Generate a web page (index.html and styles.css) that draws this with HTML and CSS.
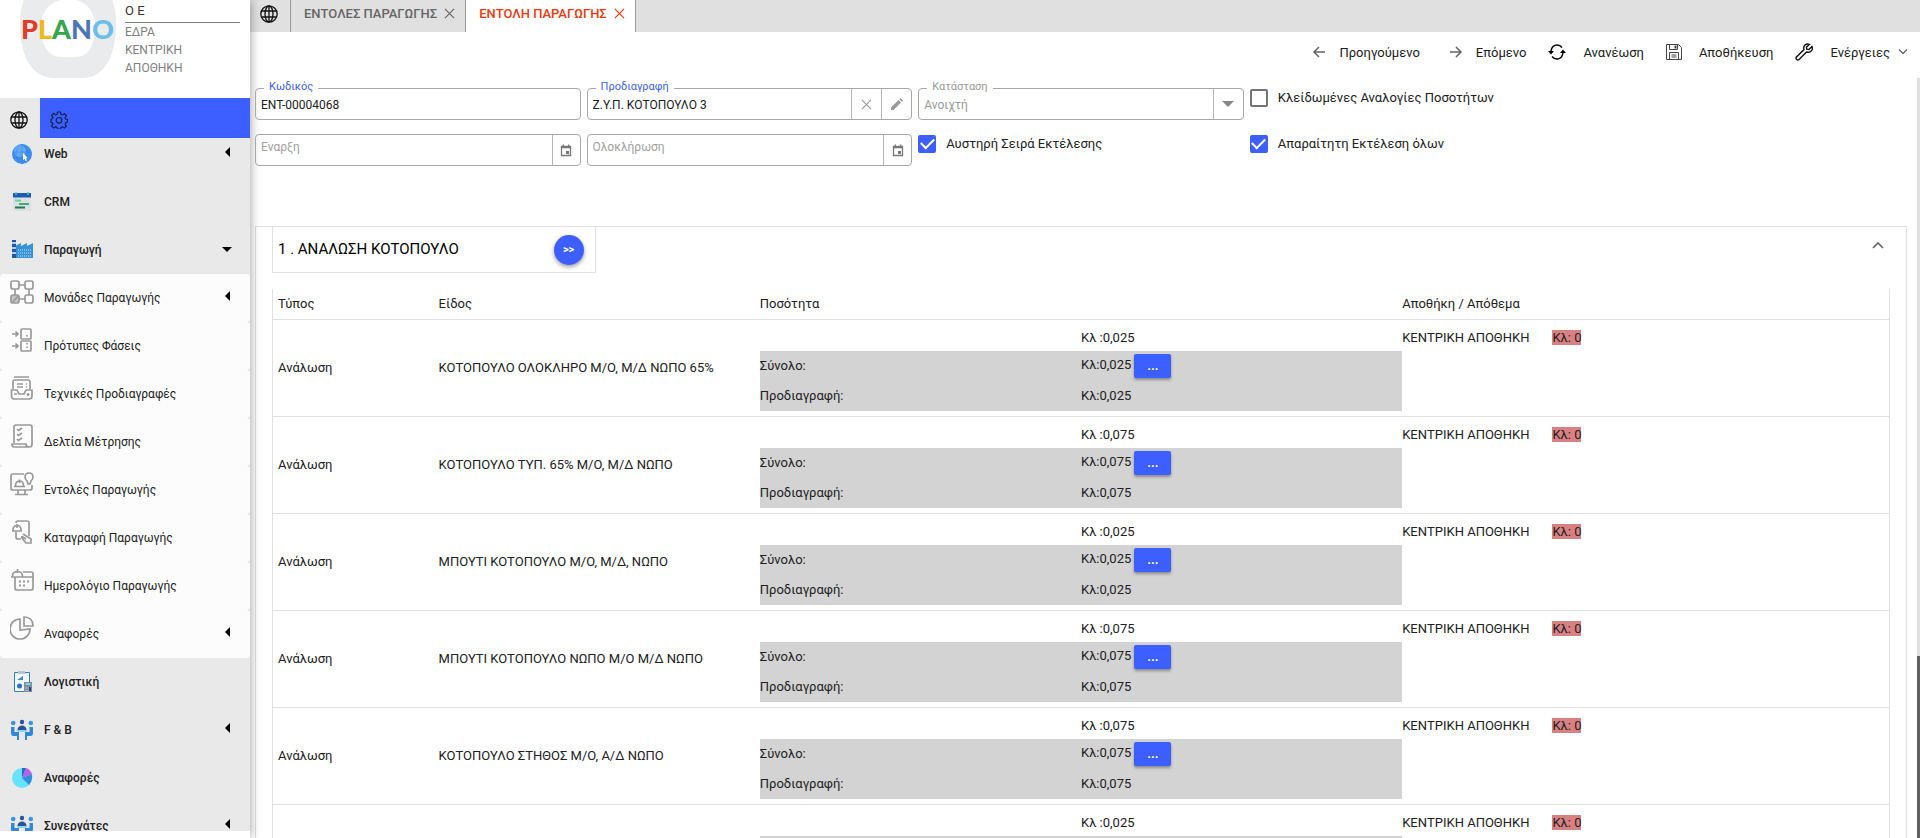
FILE: index.html
```
<!DOCTYPE html>
<html lang="el">

<head>
    <meta charset="UTF-8">
    <meta name="viewport" content="width=device-width, initial-scale=1.0">
    <title>Εντολή Παραγωγής</title>
    <link rel="stylesheet" href="styles.css">
</head>

<body>
    <!-- shared icons -->
    <svg class="defs" width="0" height="0">
        <symbol id="globe" viewBox="0 0 18 18">
            <g fill="none" stroke="#111" stroke-width="1.3">
                <circle cx="9" cy="9" r="8.2" />
                <ellipse cx="9" cy="9" rx="4" ry="8" />
                <path d="M9 1v16M1.8 6h14.4M1.8 12h14.4" />
            </g>
        </symbol>
        <symbol id="close" viewBox="0 0 12 12">
            <path d="M1 1l10 10M11 1L1 11" fill="none" stroke="currentColor" stroke-width="1.3" />
        </symbol>
        <symbol id="calendar" viewBox="0 0 12 13">
            <path d="M1.5 2.5h9v9h-9zM1 3.5h10M3.3 .5v2M8.7 .5v2" fill="none" stroke="#777" stroke-width="1.3" />
            <path d="M6 7h3v3H6z" fill="#777" />
        </symbol>
        <symbol id="people" viewBox="0 0 24 22">
            <circle cx="12" cy="3" r="2.2" fill="#27549b" />
            <path d="M7.500 11c0-6 9-6 9 0z" fill="#27549b" />
            <path d="M6 11h12l-2 2H8z" fill="#8fd3f5" />
            <circle cx="3.200" cy="4" r="2.300" fill="#3d94e0" />
            <circle cx="20.800" cy="4" r="2.300" fill="#3d94e0" />
            <path d="M1 8h3.500v5h4.500v8H7v-4H3.500Q1 17 1 14zM23 8h-3.500v5H15v8h2v-4h3.500q2.500 0 2.500-3z" fill="#3387d8" />
        </symbol>
    </svg>

    <div class="layout">
        <aside class="sidebar">
            <div class="brand">
                <div class="logo">
                    <svg width="98" height="78" viewBox="0 0 98 78">
                        <path d="M49-30C82-30 97-8 97 24C97 58 84 78 64 78H35C14 78 1 58 1 24C1-8 16-30 49-30zM42 0C28 3 22 14 22 27C22 42 28 57 42 57H57C71 57 76 42 76 27C76 14 70 3 57 0z" fill="#e9ebed" fill-rule="evenodd" />
                    </svg>
                    <div class="logo-text"><span class="c1">P</span><span class="c2">L</span><span class="c3">A</span><span class="c4">N</span><span class="c5">O</span></div>
                </div>
                <div class="company">
                    <div class="company-name">Ο Ε</div>
                    <div>ΕΔΡΑ</div>
                    <div>ΚΕΝΤΡΙΚΗ</div>
                    <div>ΑΠΟΘΗΚΗ</div>
                </div>
            </div>
            <div class="side-tabs">
                <button class="side-tab" aria-label="Μενού"><svg width="18" height="18"><use href="#globe" /></svg></button>
                <button class="side-tab side-tab-active" aria-label="Ρυθμίσεις">
                    <svg width="18" height="18" viewBox="0 0 18 18" fill="none" stroke="#16204f" stroke-width="1.200">
                        <path d="M7.500 1h3l.5 2.300 1.300.6 2-1.300 2.100 2.100-1.300 2 .6 1.300 1.800.5v2.500l-1.800.8-.6 1.300 1.300 2-2.100 1.900-2-1.200-1.300.6-.5 1.600h-3l-.5-1.600-1.300-.6-2 1.200-2.100-2 1.300-1.900-.6-1.300-1.300-.5V8.500l1.300-.8.6-1.300-1.300-2 2.100-1.900 2 1.300L7 3.300z" />
                        <circle cx="9" cy="9.300" r="2.800" />
                    </svg>
                </button>
            </div>
            <nav class="menu">
                <ul class="menu-list">
                    <li><a href="#" class="item">
                            <svg width="24" height="24" viewBox="0 0 24 24">
                                <circle cx="12" cy="12" r="10" fill="#3f8ef0" />
                                <circle cx="10" cy="9" r="6" fill="#62aaf7" />
                                <path d="M2 10h20M3 16h18M12 2v20M12 2C4 8 4 16 12 22M12 2c8 6 8 14 0 20" fill="none" stroke="#2f78df" stroke-width=".4" />
                                <path d="M13 11v7l1.600-1.300L15.700 19l1.200-.6-1-2.200h2z" fill="#fff" />
                            </svg>
                            <span>Web</span><i class="arrow-left"></i></a></li>
                    <li><a href="#" class="item">
                            <svg width="24" height="24" viewBox="0 0 24 24">
                                <path d="M3 7h18v14H3z" fill="#dcdfe3" />
                                <path d="M3 3h18v4.500H3z" fill="#1e5cb3" />
                                <path d="M6 2v3M18 2v3" stroke="#45c3f2" stroke-width="1.500" />
                                <path d="M5 10.500h6" stroke="#5fd49a" stroke-width="2" />
                                <path d="M9 14h10" stroke="#3fae72" stroke-width="2" />
                                <path d="M5 17.500h10" stroke="#1e7a48" stroke-width="2" />
                            </svg>
                            <span>CRM</span></a></li>
                    <li><a href="#" class="item">
                            <svg width="24" height="24" viewBox="0 0 24 24">
                                <path d="M5 20V8l6-3v3l6-3v3l6-3v15z" fill="#3592d6" />
                                <path d="M2 2h4v18H2z" fill="#2158a5" />
                                <path d="M2 5h4M2 10h4M2 15h4" stroke="#b9cbe0" stroke-width="2" />
                                <path d="M8 12h13M8 15h13M8 18h13" stroke="#d4ebfb" stroke-width="1" stroke-dasharray="1 1" />
                            </svg>
                            <span>Παραγωγή</span><i class="arrow-down"></i></a>
                        <ul class="submenu">
                            <li><a href="#" class="item">
                                    <svg class="line" width="24" height="24" viewBox="0 0 24 24">
                                        <rect x="1" y="1" width="8" height="8" rx="2" />
                                        <rect x="15" y="1" width="8" height="8" rx="2" />
                                        <rect x="15" y="15" width="8" height="8" rx="2" />
                                        <rect x="1" y="15" width="8" height="8" rx="2" fill="#c4c4c4" />
                                        <path d="M9 5h6M9 19h6M5 9v6M19 9v6M3 22l5-6" />
                                    </svg>
                                    <span>Μονάδες Παραγωγής</span><i class="arrow-left"></i></a></li>
                            <li><a href="#" class="item">
                                    <svg class="line" width="24" height="24" viewBox="0 0 24 24">
                                        <rect x="11" y="1" width="10" height="10" rx="1" />
                                        <rect x="11" y="13" width="10" height="10" rx="1" />
                                        <path d="M2 6h6M5.500 3.500L8 6 5.500 8.500M2 18h6M5.500 15.500L8 18l-2.500 2.500M17 7v1.500M17 15v1.500M17 18.500V20" />
                                    </svg>
                                    <span>Πρότυπες Φάσεις</span></a></li>
                            <li><a href="#" class="item">
                                    <svg class="line" width="24" height="24" viewBox="0 0 24 24">
                                        <path d="M4 1h15M3 13V6q0-2 2-2h13q2 0 2 2v7M7 8h6M16 8h1M7 11h6M16 11h1M1.500 14H7l2 4h5l2-4h6v6q0 3-3 3H4q-2.500 0-2.500-3zM18 17v3M16.500 18.500h3M4 18h3" />
                                    </svg>
                                    <span>Τεχνικές Προδιαγραφές</span></a></li>
                            <li><a href="#" class="item">
                                    <svg class="line" width="24" height="24" viewBox="0 0 24 24">
                                        <path d="M4 19V3q0-2 2-2h14q2 0 2 2v17q0 3-2.500 3H4q-2 0-2-3h14q0 3 3 3M7 5l1.500 1.500L12 4M7 10l1.500 1.500L12 9M7 15l1.500 1.500L12 14" />
                                    </svg>
                                    <span>Δελτία Μέτρησης</span></a></li>
                            <li><a href="#" class="item">
                                    <svg class="line" width="24" height="24" viewBox="0 0 24 24">
                                        <path d="M14 2H3Q1 2 1 4v12q0 2 2 2h17q2 0 2-2v-3M8 18v4M15 18v4M5 22.500h13M4 14.500h11M5.500 14q0-5 4-5t4 5M9.500 7.500V11M19 1q-4 0-4 4 0 2 2 4l1 3h2l1-3q2-2 2-4 0-4-4-4z" />
                                    </svg>
                                    <span>Εντολές Παραγωγής</span></a></li>
                            <li><a href="#" class="item">
                                    <svg class="line" width="24" height="24" viewBox="0 0 24 24">
                                        <path d="M6 3q0-2 2-2h9q2 0 2 2v13M6 12v5q0 2 2 2h3M2 11h10M3 10.500q0-5 4-5t4 5M7 4v4M13 14l8 5v4h-5l-4-5q-1-2 1-1l3 2" />
                                    </svg>
                                    <span>Καταγραφή Παραγωγής</span></a></li>
                            <li><a href="#" class="item">
                                    <svg class="line" width="24" height="24" viewBox="0 0 24 24">
                                        <path d="M13 4h8q2 0 2 2v14q0 2-2 2H7q-2 0-2-2V9.500M1 9h22M2.500 8.500q0-5 5-5t5 5M7.500 1v4" />
                                        <path d="M9 13.500h11M9 17.500h8" stroke-width="2" stroke-dasharray="2 2" />
                                    </svg>
                                    <span>Ημερολόγιο Παραγωγής</span></a></li>
                            <li><a href="#" class="item">
                                    <svg class="line" width="24" height="24" viewBox="0 0 24 24">
                                        <path d="M10 3a10 10 0 1 0 10 10l-10 1zM14 1v9h9q0-9-9-9z" />
                                    </svg>
                                    <span>Αναφορές</span><i class="arrow-left"></i></a></li>
                        </ul>
                    </li>
                    <li><a href="#" class="item">
                            <svg width="24" height="24" viewBox="0 0 24 24">
                                <path d="M4.500 2.500h15v19h-15z" fill="#f4f8fc" stroke="#2f7fd0" />
                                <path d="M8 1h7v3H8z" fill="#b9c4ce" />
                                <path d="M7 10l6-4v4z" fill="#2f8de0" />
                                <circle cx="9.500" cy="16" r="2.500" fill="#2671cc" />
                                <path d="M14 12h8v10h-8z" fill="#7f8c99" />
                                <path d="M15.500 14h5" stroke="#7fd3f0" stroke-width="2" />
                                <path d="M15.500 18h5M15.500 20.500h3" stroke="#dfe5ea" stroke-dasharray="1 1" />
                                <path d="M19 17h2v4h-2z" fill="#1c4786" />
                            </svg>
                            <span>Λογιστική</span></a></li>
                    <li><a href="#" class="item"><svg width="24" height="24"><use href="#people" /></svg>
                            <span>F &amp; B</span><i class="arrow-left"></i></a></li>
                    <li><a href="#" class="item">
                            <svg width="24" height="24" viewBox="0 0 24 24">
                                <circle cx="12" cy="12" r="10" fill="#66e3ff" />
                                <path d="M12 12V2l4 0z" fill="#2369c8" />
                                <path d="M12 12l4-10q4 1 6 6z" fill="#bc61e6" />
                                <path d="M12 12l10-4q1 6-3 11z" fill="#318fe0" />
                            </svg>
                            <span>Αναφορές</span></a></li>
                    <li><a href="#" class="item"><svg width="24" height="24"><use href="#people" /></svg>
                            <span>Συνεργάτες</span><i class="arrow-left"></i></a></li>
                </ul>
            </nav>
        </aside>

        <main class="main">
            <div class="tabs">
                <button class="tab tab-home" aria-label="Αρχική"><svg width="18" height="18"><use href="#globe" /></svg></button>
                <button class="tab">ΕΝΤΟΛΕΣ ΠΑΡΑΓΩΓΗΣ <svg width="11" height="11"><use href="#close" /></svg></button>
                <button class="tab tab-active">ΕΝΤΟΛΗ ΠΑΡΑΓΩΓΗΣ <svg width="11" height="11"><use href="#close" /></svg></button>
            </div>

            <div class="toolbar">
                <button class="tool tool-arrow">
                    <svg width="14" height="14" viewBox="0 0 14 14"><path d="M13 7H2M7 2L2 7l5 5" fill="none" stroke="#666" stroke-width="1.500" /></svg>
                    Προηγούμενο</button>
                <button class="tool tool-arrow">
                    <svg width="14" height="14" viewBox="0 0 14 14"><path d="M1 7h11M7 2l5 5-5 5" fill="none" stroke="#666" stroke-width="1.500" /></svg>
                    Επόμενο</button>
                <button class="tool">
                    <svg width="18" height="16" viewBox="0 0 18 16"><path d="M3 9V7q1-6 6-6 3 0 5 2.500M15 7v2q-1 6-6 6-3 0-5-2.500" fill="none" stroke="#000" stroke-width="1.500" /><path d="M0 7h6L3 10.500zM12 9h6l-3-3.500z" /></svg>
                    Ανανέωση</button>
                <button class="tool">
                    <svg width="16" height="16" viewBox="0 0 16 16" fill="none" stroke="#444"><path d="M.5.500h12l3 3v12H.500zM3.500.500v5h8v-5M3.500 15.500v-7h9v7M5.500 11h5M5.500 13h5" /><path d="M8.500 1.500h2v3h-2z" fill="#444" stroke="none" /></svg>
                    Αποθήκευση</button>
                <button class="tool">
                    <svg width="18" height="18" viewBox="0 0 18 18" fill="none" stroke="#111" stroke-width="1.400"><path d="M14.500 1.300Q10.500 0 9 3.500q-.5 1.500 0 3L1.500 14q-1 1.500.3 2.500 1.200 1 2.500-.3L11.500 9q4 1 5.500-2 .8-1.800 0-3.500L14 6.500l-2.300-.3L11.500 4z" /></svg>
                    Ενέργειες
                    <svg class="chevron" width="10" height="6" viewBox="0 0 10 6"><path d="M1 .500l4 4 4-4" fill="none" stroke="#666" stroke-width="1.300" /></svg></button>
            </div>

            <div class="body">
                <div class="content">
                    <form class="fields">
                        <div class="field">
                            <label for="code">Κωδικός</label>
                            <input type="text" id="code" value="ENT-00004068">
                        </div>
                        <div class="field">
                            <label for="spec">Προδιαγραφή</label>
                            <input type="text" id="spec" value="Ζ.Υ.Π. ΚΟΤΟΠΟΥΛΟ 3">
                            <button type="button" class="addon" aria-label="Καθαρισμός"><svg width="11" height="11"><use href="#close" /></svg></button>
                            <button type="button" class="addon" aria-label="Επεξεργασία"><svg width="12" height="12" viewBox="0 0 12 12" fill="#999"><path d="M0 12V9.500L7.500 2 10 4.500 2.500 12zM8.300 1.200L9.500 0 12 2.500l-1.200 1.200z" /></svg></button>
                        </div>
                        <div class="field field-off">
                            <label for="status">Κατάσταση</label>
                            <select id="status" disabled>
                                <option>Ανοιχτή</option>
                            </select>
                            <span class="addon"><i class="caret"></i></span>
                        </div>
                        <div class="check">
                            <input type="checkbox" id="locked">
                            <label for="locked">Κλείδωμένες Αναλογίες Ποσοτήτων</label>
                        </div>
                        <div class="field start-row">
                            <input type="text" placeholder="Εναρξη" aria-label="Εναρξη">
                            <button type="button" class="addon addon-date" aria-label="Ημερολόγιο"><svg width="12" height="13"><use href="#calendar" /></svg></button>
                        </div>
                        <div class="field">
                            <input type="text" placeholder="Ολοκλήρωση" aria-label="Ολοκλήρωση">
                            <button type="button" class="addon addon-date" aria-label="Ημερολόγιο"><svg width="12" height="13"><use href="#calendar" /></svg></button>
                        </div>
                        <div class="check">
                            <input type="checkbox" id="strict" checked>
                            <label for="strict">Αυστηρή Σειρά Εκτέλεσης</label>
                        </div>
                        <div class="check">
                            <input type="checkbox" id="required" checked>
                            <label for="required">Απαραίτητη Εκτέλεση όλων</label>
                        </div>
                    </form>

                    <section class="phase">
                        <div class="phase-head">
                            <div class="phase-title">
                                <span>1 . ΑΝΑΛΩΣΗ ΚΟΤΟΠΟΥΛΟ</span>
                                <button class="next">&gt;&gt;</button>
                            </div>
                            <button class="collapse" aria-label="Σύμπτυξη"><svg width="12" height="8" viewBox="0 0 12 8"><path d="M1 7l5-5 5 5" fill="none" stroke="#666" stroke-width="1.600" /></svg></button>
                        </div>
                        <table class="grid">
                            <thead>
                                <tr>
                                    <th>Τύπος</th>
                                    <th>Είδος</th>
                                    <th>Ποσότητα</th>
                                    <th>Αποθήκη / Απόθεμα</th>
                                </tr>
                            </thead>
                            <tbody>
                                <tr>
                                    <td>Ανάλωση</td>
                                    <td>ΚΟΤΟΠΟΥΛΟ ΟΛΟΚΛΗΡΟ Μ/Ο, Μ/Δ ΝΩΠΟ 65%</td>
                                    <td class="qty">
                                        <div class="amount">Κλ :0,025</div>
                                        <div class="line-row"><span>Σύνολο:</span><span class="total">Κλ:0,025 <button class="more">...</button></span></div>
                                        <div class="line-row"><span>Προδιαγραφή:</span><span>Κλ:0,025</span></div>
                                    </td>
                                    <td class="stock"><span>ΚΕΝΤΡΙΚΗ ΑΠΟΘΗΚΗ</span><span class="zero">Κλ: 0</span></td>
                                </tr>
                                <tr>
                                    <td>Ανάλωση</td>
                                    <td>ΚΟΤΟΠΟΥΛΟ ΤΥΠ. 65% Μ/Ο, Μ/Δ ΝΩΠΟ</td>
                                    <td class="qty">
                                        <div class="amount">Κλ :0,075</div>
                                        <div class="line-row"><span>Σύνολο:</span><span class="total">Κλ:0,075 <button class="more">...</button></span></div>
                                        <div class="line-row"><span>Προδιαγραφή:</span><span>Κλ:0,075</span></div>
                                    </td>
                                    <td class="stock"><span>ΚΕΝΤΡΙΚΗ ΑΠΟΘΗΚΗ</span><span class="zero">Κλ: 0</span></td>
                                </tr>
                                <tr>
                                    <td>Ανάλωση</td>
                                    <td>ΜΠΟΥΤΙ ΚΟΤΟΠΟΥΛΟ Μ/Ο, Μ/Δ, ΝΩΠΟ</td>
                                    <td class="qty">
                                        <div class="amount">Κλ :0,025</div>
                                        <div class="line-row"><span>Σύνολο:</span><span class="total">Κλ:0,025 <button class="more">...</button></span></div>
                                        <div class="line-row"><span>Προδιαγραφή:</span><span>Κλ:0,025</span></div>
                                    </td>
                                    <td class="stock"><span>ΚΕΝΤΡΙΚΗ ΑΠΟΘΗΚΗ</span><span class="zero">Κλ: 0</span></td>
                                </tr>
                                <tr>
                                    <td>Ανάλωση</td>
                                    <td>ΜΠΟΥΤΙ ΚΟΤΟΠΟΥΛΟ ΝΩΠΟ Μ/Ο Μ/Δ ΝΩΠΟ</td>
                                    <td class="qty">
                                        <div class="amount">Κλ :0,075</div>
                                        <div class="line-row"><span>Σύνολο:</span><span class="total">Κλ:0,075 <button class="more">...</button></span></div>
                                        <div class="line-row"><span>Προδιαγραφή:</span><span>Κλ:0,075</span></div>
                                    </td>
                                    <td class="stock"><span>ΚΕΝΤΡΙΚΗ ΑΠΟΘΗΚΗ</span><span class="zero">Κλ: 0</span></td>
                                </tr>
                                <tr>
                                    <td>Ανάλωση</td>
                                    <td>ΚΟΤΟΠΟΥΛΟ ΣΤΗΘΟΣ Μ/Ο, Α/Δ ΝΩΠΟ</td>
                                    <td class="qty">
                                        <div class="amount">Κλ :0,075</div>
                                        <div class="line-row"><span>Σύνολο:</span><span class="total">Κλ:0,075 <button class="more">...</button></span></div>
                                        <div class="line-row"><span>Προδιαγραφή:</span><span>Κλ:0,075</span></div>
                                    </td>
                                    <td class="stock"><span>ΚΕΝΤΡΙΚΗ ΑΠΟΘΗΚΗ</span><span class="zero">Κλ: 0</span></td>
                                </tr>
                                <tr>
                                    <td></td>
                                    <td></td>
                                    <td class="qty">
                                        <div class="amount">Κλ :0,025</div>
                                        <div class="line-row"></div>
                                        <div class="line-row"></div>
                                    </td>
                                    <td class="stock"><span>ΚΕΝΤΡΙΚΗ ΑΠΟΘΗΚΗ</span><span class="zero">Κλ: 0</span></td>
                                </tr>
                            </tbody>
                        </table>
                    </section>
                </div>
                <div class="scroll-track">
                    <div class="scroll-thumb"></div>
                </div>
            </div>
        </main>
    </div>
</body>

</html>
```

FILE: styles.css
```
* {
    box-sizing: border-box;
}

body {
    margin: 0;
    font-family: Roboto, "Liberation Sans", sans-serif;
    font-size: 13px;
    color: #212121;
    background-color: #fff;
}

button {
    font-family: inherit;
    font-size: 13px;
    color: inherit;
    background: none;
    border: none;
    padding: 0;
    cursor: pointer;
}

ul {
    list-style: none;
    margin: 0;
    padding: 0;
}

svg {
    flex: none;
}

.defs {
    display: none;
}

.layout {
    display: flex;
    height: 100vh;
    overflow: hidden;
}

/* sidebar */
.sidebar {
    position: relative;
    display: flex;
    flex-direction: column;
    flex: none;
    width: 250px;
    padding-bottom: 7px;
    background-color: #fff;
    box-shadow: 0 0 10px rgba(0, 0, 0, 0.4);
}

.brand {
    display: flex;
    gap: 8px;
    height: 98px;
    padding: 0 10px 0 19px;
}

.logo {
    position: relative;
    width: 98px;
}

.logo-text {
    position: absolute;
    top: 14px;
    left: 2px;
    font-family: Lato, sans-serif;
    font-size: 27px;
    font-weight: 900;
    line-height: 30px;
}

.c1 {
    color: #e23b2a;
}

.c2 {
    color: #efb91c;
}

.c3 {
    color: #35a64e;
}

.c4 {
    color: #4c74bd;
}

.c5 {
    color: #6bbdea;
}

.company {
    flex: 1;
    font-size: 12px;
    line-height: 18px;
    color: #808080;
}

.company-name {
    border-bottom: 1px solid #808080;
    font-size: 13px;
    line-height: 22px;
    color: #333;
}

.side-tabs {
    display: flex;
    height: 40px;
    background-color: #e9e9e9;
}

.side-tab {
    display: flex;
    align-items: center;
    width: 40px;
    padding: 4px 10px 0;
}

.side-tab-active {
    flex: 1;
    background-color: #3d5fff;
}

.menu {
    flex: 1;
    overflow: hidden;
    background-color: #e9e9e9;
}

.menu-list {
    margin-top: -8px;
}

.item {
    display: flex;
    align-items: center;
    gap: 10px;
    height: 48px;
    padding: 0 18px 0 10px;
    font-size: 12px;
    font-weight: 500;
    color: #212121;
    text-decoration: none;
}

.submenu .item {
    font-weight: 400;
    background-color: #fcfcfc;
    border-radius: 4px;
}

.submenu svg {
    margin-bottom: 12px;
}

.line {
    fill: none;
    stroke: #999;
    stroke-width: 1.7;
}

.arrow-left {
    margin: 0 2px 4px auto;
    border: 5px solid transparent;
    border-right-color: #000;
    border-left: none;
}

.arrow-down {
    margin: 0 0 2px auto;
    border: 5px solid transparent;
    border-top-color: #000;
    border-bottom: none;
}

/* main */
.main {
    flex: 1;
    display: flex;
    flex-direction: column;
    min-width: 0;
}

.tabs {
    display: flex;
    height: 32px;
    flex: none;
    background-color: #e0e0e0;
}

.tab {
    display: flex;
    align-items: center;
    gap: 7px;
    padding: 0 10px 5px 13px;
    border-right: 1px solid #999;
    font-weight: 500;
    color: #666;
}

.tab-home {
    padding: 0 12px 4px 10px;
}

.tab-active {
    background-color: #fff;
    color: #f4380c;
}

.toolbar {
    display: flex;
    justify-content: flex-end;
    align-items: center;
    flex: none;
    gap: 22px;
    height: 46px;
    padding: 0 12px 6px 0;
}

.tool {
    display: flex;
    align-items: center;
    gap: 17px;
}

.tool-arrow {
    gap: 13px;
    padding-left: 7px;
}

.chevron {
    margin-left: -9px;
}

.body {
    flex: 1;
    display: flex;
    min-height: 0;
}

.content {
    flex: 1;
    overflow: hidden;
    padding: 10px 10px 0 5px;
}

.scroll-track {
    display: flex;
    flex-direction: column;
    justify-content: flex-end;
    width: 3px;
    background-color: #e0e0e0;
}

.scroll-thumb {
    height: 24%;
    background-color: #616161;
}

/* form */
.fields {
    display: grid;
    grid-template-columns: repeat(5, 1fr);
    gap: 14px 6px;
    margin-bottom: 60px;
}

.start-row {
    grid-column: 1;
}

.field {
    position: relative;
    display: flex;
    height: 32px;
    border: 1px solid #a8a8a8;
    border-radius: 4px;
}

.field label {
    position: absolute;
    top: -9px;
    left: 8px;
    padding: 0 5px;
    font-size: 11px;
    line-height: 14px;
    color: #3d5fff;
    background-color: #fff;
}

.field input,
.field select {
    flex: 1;
    min-width: 0;
    padding: 2px 5px 0;
    border: none;
    outline: none;
    appearance: none;
    font-family: inherit;
    font-size: 12px;
    color: #212121;
    background: none;
}

.field input::placeholder {
    color: #a0a0a0;
}

.field input:placeholder-shown {
    padding: 0 5px 6px;
}

.field-off label,
.field-off select {
    color: #999;
    opacity: 1;
}

.addon {
    display: flex;
    align-items: center;
    justify-content: center;
    width: 30px;
    border-left: 1px solid #b5b5b5;
    color: #999;
}

.addon-date {
    width: 28px;
}

.caret {
    border: 6px solid transparent;
    border-top-color: #888;
    border-bottom: none;
}

.check {
    display: flex;
    align-items: flex-start;
    gap: 10px;
    padding-top: 1px;
    line-height: 18px;
}

.check input {
    display: grid;
    place-items: center;
    appearance: none;
    width: 18px;
    height: 18px;
    margin: 0;
    border: 2px solid #757575;
    border-radius: 2px;
}

.check input:checked {
    border-color: #3d5fff;
    background-color: #3d5fff;
}

.check input:checked::after {
    content: "";
    width: 11px;
    height: 6px;
    margin-bottom: 4px;
    border: solid #fff;
    border-width: 0 0 2px 2px;
    transform: rotate(-45deg);
}

/* phase card */
.phase {
    padding: 0 16px;
    border: 1px solid #e0e0e0;
}

.phase-head {
    display: flex;
    justify-content: space-between;
    align-items: flex-start;
    margin-bottom: 16px;
}

.phase-title {
    display: flex;
    align-items: center;
    justify-content: space-between;
    width: 20%;
    height: 46px;
    padding: 0 11px 2px 5px;
    border: 1px solid #e0e0e0;
    border-top: none;
    font-size: 15px;
    color: #000;
}

.next {
    width: 30px;
    height: 30px;
    margin-top: 2px;
    border-radius: 50%;
    font-size: 11px;
    font-weight: 700;
    color: #fff;
    background-color: #3d5fff;
    box-shadow: 0 2px 4px rgba(0, 0, 0, 0.4);
}

.collapse {
    padding: 10px 6px;
}

.grid {
    display: block;
    border: 1px solid #e0e0e0;
    border-width: 0 1px;
}

.grid thead,
.grid tbody {
    display: block;
}

.grid tr {
    display: grid;
    grid-template-columns: 1fr 2fr 4fr 3fr;
    align-items: center;
    height: 97px;
    padding: 0 5px 2px;
    border-bottom: 1px solid #e0e0e0;
}

.grid thead tr {
    height: 31px;
}

.grid th,
.grid td {
    padding: 0;
    font-weight: 400;
    text-align: left;
}

.grid .qty {
    padding-bottom: 2px;
}

.amount {
    height: 30px;
    margin-left: 50%;
    line-height: 34px;
}

.line-row {
    display: grid;
    grid-template-columns: 1fr 1fr;
    height: 30px;
    line-height: 30px;
    background-color: #d3d3d3;
}

.total {
    display: flex;
    gap: 3px;
    line-height: 28px;
}

.more {
    width: 37px;
    height: 24px;
    margin-top: 3px;
    border-radius: 2px;
    font-weight: 700;
    line-height: 24px;
    color: #fff;
    background-color: #3d5fff;
    box-shadow: 0 2px 3px rgba(0, 0, 0, 0.35);
}

.grid .stock {
    display: flex;
    align-self: start;
    gap: 23px;
    padding-top: 10px;
}

.zero {
    background-color: #d98083;
}
```
